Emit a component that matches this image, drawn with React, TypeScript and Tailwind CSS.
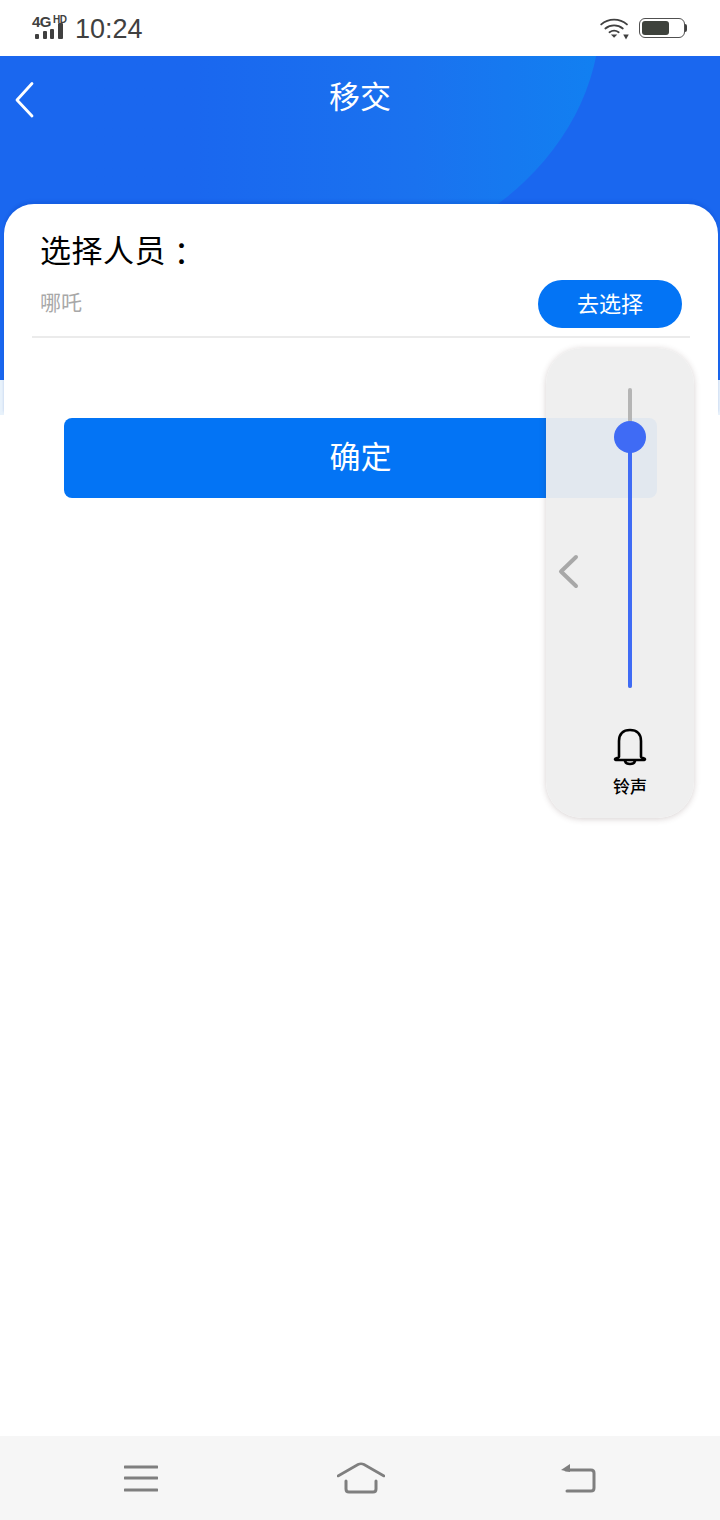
const CJK = "font-['Roboto','Noto_Sans_CJK_SC',sans-serif]";

function StatusBar() {
  return (
    <div className="flex h-14 items-center justify-between bg-white pl-[32px] pr-[33px]">
      <div className="flex items-center gap-[10px]">
        <div className="relative mt-[2px] h-[26px] w-[33px]">
          <span className="absolute left-0 top-[-2px] font-['Liberation_Sans',sans-serif] text-[15px] font-bold leading-[16px] tracking-[-0.5px] text-[#404040]">4G</span>
          <span className="absolute left-[21px] top-[-1px] font-['Liberation_Sans',sans-serif] text-[10px] font-bold leading-[10px] tracking-[-0.5px] text-[#404040]">HD</span>
          <div className="absolute bottom-[3px] left-[3px] flex items-end gap-[3.5px]">
            <div className="h-[5px] w-[4px] rounded-[1px] bg-[#404040]" />
            <div className="h-[8px] w-[4px] rounded-[1px] bg-[#404040]" />
            <div className="h-[10px] w-[4px] rounded-[1px] bg-[#404040]" />
            <div className="h-[16px] w-[5px] rounded-[1px] bg-[#404040]" />
          </div>
        </div>
        <span className="mt-[2px] font-['Liberation_Sans',sans-serif] text-[27px] leading-none text-[#404040]">10:24</span>
      </div>
      <div className="flex items-center gap-[9px]">
        <svg className="mt-[1px]" width="30" height="22" viewBox="0 0 32 24" fill="none">
          <path d="M1 7 C9 0 21 0 29 7" stroke="#404040" strokeWidth="2" strokeLinecap="round" />
          <path d="M5.5 11.5 C11 7 19 7 24.5 11.5" stroke="#404040" strokeWidth="2" strokeLinecap="round" />
          <path d="M10 15.5 C13 13.5 17 13.5 20 15.5" stroke="#404040" strokeWidth="2" strokeLinecap="round" />
          <path d="M11.5 18 L18.5 18 L15 21.5 Z" fill="#404040" />
          <path d="M25 18 L31 18 L28 23.5 Z" fill="#404040" />
        </svg>
        <div className="flex items-center">
          <div className="h-[20px] w-[46px] rounded-[6px] border border-[#505050] p-[2px]">
            <div className="h-full w-[27px] rounded-[3px] bg-[#3e423c]" />
          </div>
          <div className="h-[8px] w-[2px] rounded-r-[2px] bg-[#404040]" />
        </div>
      </div>
    </div>
  );
}

function Header() {
  return (
    <div className="relative h-[148px] overflow-hidden bg-[#1a67ef]">
      <div className="absolute left-[-60px] top-[-300px] h-[520px] w-[660px] rounded-[50%] bg-linear-to-r from-[#1a67ef] from-[38%] via-[#1a72ef] via-[72%] to-[#1180f1]" />
      <div className="relative flex h-[80px] items-center justify-center">
        <svg className="absolute left-[14px] top-[25px]" width="22" height="38" viewBox="0 0 22 38" fill="none">
          <path d="M18 2.5 L3 19 L18 35" stroke="white" strokeWidth="2.8" strokeLinecap="round" strokeLinejoin="round" />
        </svg>
        <span className={`${CJK} mt-[2px] text-[31px] leading-none text-white`}>移交</span>
      </div>
    </div>
  );
}

function Card() {
  return (
    <div className="relative bg-[#1a67ef]">
      <div className="h-[176px]" />
      <div className="h-[35px] bg-[#e8f2fb]" />
      <div className="absolute left-[4px] right-[2px] top-0 h-[211px] rounded-t-[30px] bg-white pl-[28px] pr-[28px] pt-[29px] shadow-[0_-3px_3px_rgba(0,60,180,0.2)]">
        <div className={`${CJK} mt-[1px] flex pl-[8px] text-[31px] leading-[36px] tracking-[0.5px] text-black`}>
          <span>选择人员</span>
          <span className="font-['Noto_Sans_CJK_TC',sans-serif]">：</span>
        </div>
        <div className="mt-[10px] flex h-[58px] items-start justify-between border-b-2 border-[#ebebeb] pl-[8px]">
          <span className={`${CJK} mt-[11px] text-[21px] leading-[24px] text-[#a8a8a8]`}>哪吒</span>
          <button className={`${CJK} mr-[8px] flex h-[48px] w-[144px] items-center justify-center rounded-full bg-[#0374f5] text-[22px] text-white`}>去选择</button>
        </div>
      </div>
    </div>
  );
}

function VolumePanel() {
  return (
    <div className="absolute left-[546px] top-[348px] flex h-[470px] w-[148px] rounded-[36px] bg-[#eeeeee]/95 shadow-[0_1px_6px_rgba(70,40,40,0.22)]">
      <svg className="absolute left-[11px] top-[206px]" width="24" height="36" viewBox="0 0 24 36" fill="none">
        <path d="M19 3 L4 17.5 L19 32" stroke="#a8a8a8" strokeWidth="4" strokeLinecap="round" strokeLinejoin="round" />
      </svg>
      <div className="absolute left-[82px] top-[40px] h-[300px] w-[4px] rounded-full bg-[#b5b5b5]" />
      <div className="absolute left-[82px] top-[88px] h-[252px] w-[4px] rounded-b-full bg-[#3f6bf5]" />
      <div className="absolute left-[68px] top-[73px] h-[32px] w-[32px] rounded-full bg-[#3f6bf5]" />
      <div className="absolute left-0 top-[380px] flex w-full flex-col items-center pl-[20px]">
        <svg width="36" height="38" viewBox="0 0 36 38" fill="none">
          <path d="M7 29 V13 C7 6 11 2 18 2 C25 2 29 6 29 13 V29 C29 30 33 30 33 31 C33 32 32 32 31 32 H5 C4 32 3 32 3 31 C3 30 7 30 7 29 Z" stroke="black" strokeWidth="2.6" strokeLinejoin="round" />
          <path d="M13 33 C14 37 22 37 23 33" stroke="black" strokeWidth="2.6" strokeLinecap="round" />
        </svg>
        <span className={`${CJK} mt-[10px] text-[17px] font-medium leading-[22px] text-black`}>铃声</span>
      </div>
    </div>
  );
}

function NavBar() {
  return (
    <div className="flex h-[84px] items-center justify-between bg-[#f6f6f6] pl-[124px] pr-[124px]">
      <svg width="34" height="28" viewBox="0 0 34 28" fill="none">
        <path d="M1 3 H33 M1 14 H33 M1 26 H33" stroke="#7f7f7f" strokeWidth="3" strokeLinecap="round" />
      </svg>
      <svg className="ml-[3px]" width="48" height="32" viewBox="0 0 48 32" fill="none">
        <path d="M1 14 L21 2.5 C23 1.5 25 1.5 27 2.5 L47 14" stroke="#7f7f7f" strokeWidth="2.6" strokeLinecap="round" />
        <path d="M9 19 V27 C9 29 10 30 12 30 H36 C38 30 39 29 39 27 V19" stroke="#7f7f7f" strokeWidth="3" strokeLinecap="round" />
      </svg>
      <svg width="36" height="30" viewBox="0 0 36 30" fill="none">
        <path d="M6 7 H31 C33 7 34 8 34 10 V25 C34 27 33 28 31 28 H7" stroke="#7f7f7f" strokeWidth="3" strokeLinecap="round" />
        <path d="M1 7 L10 1 V9 Z" fill="#7f7f7f" />
      </svg>
    </div>
  );
}

export default function App() {
  return (
    <div className="relative flex h-[1520px] w-[720px] flex-col overflow-hidden bg-white">
      <StatusBar />
      <Header />
      <Card />
      <div className="px-[64px] pt-[3px]">
        <button className={`${CJK} flex h-[80px] w-[593px] items-center justify-center rounded-[8px] bg-[#0374f5] text-[31px] text-white`}>确定</button>
      </div>
      <div className="flex-1" />
      <NavBar />
      <VolumePanel />
    </div>
  );
}
